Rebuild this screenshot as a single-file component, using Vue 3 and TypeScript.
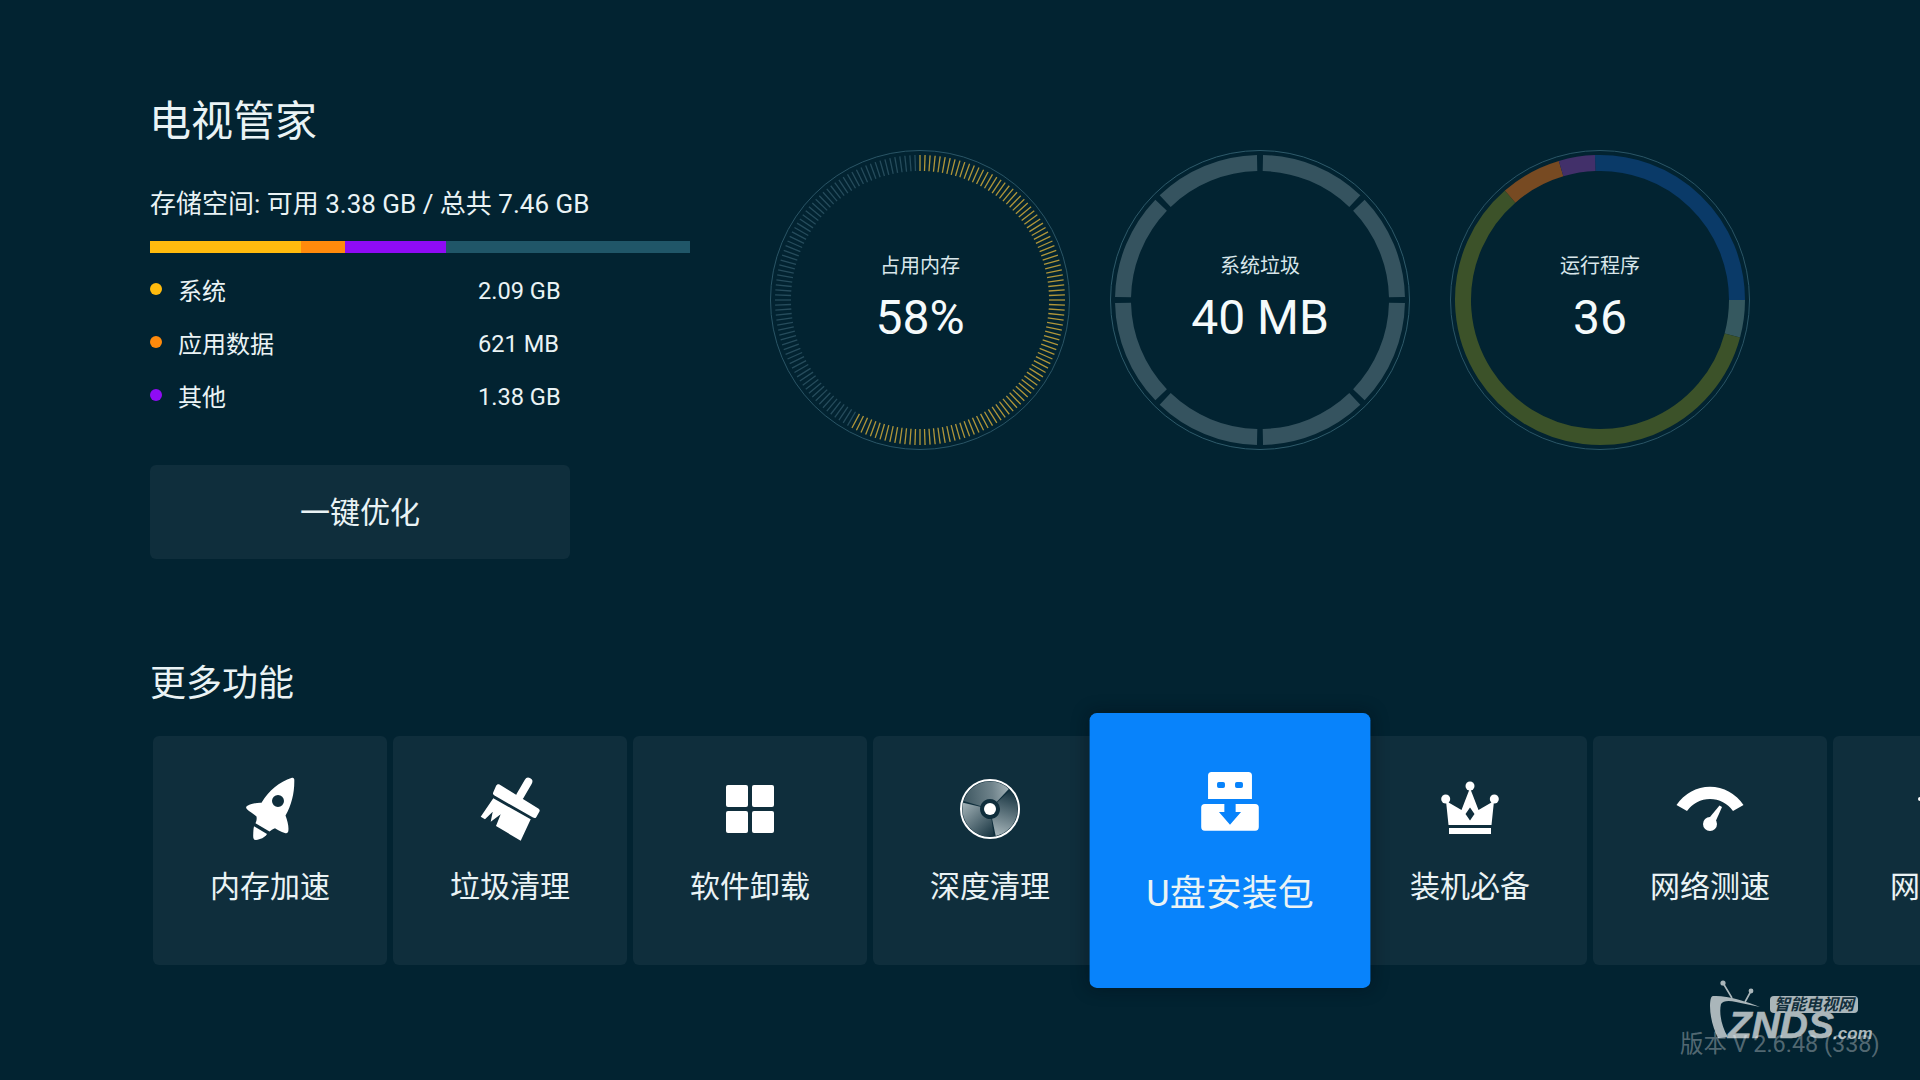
<script setup lang="ts">
import { computed } from 'vue'

const legend = [
  { name: '系统', value: '2.09 GB', color: '#ffbb0e' },
  { name: '应用数据', value: '621 MB', color: '#ff8a0c' },
  { name: '其他', value: '1.38 GB', color: '#8f0bf5' },
]

const storage = [
  { width: 151, color: '#ffbb0e' },
  { width: 44, color: '#ff8a0c' },
  { width: 101, color: '#8f0bf5' },
  { width: 244, color: '#205668' },
]

const C = 150
const point = (r: number, deg: number) => {
  const a = ((deg - 90) * Math.PI) / 180
  return { x: C + r * Math.cos(a), y: C + r * Math.sin(a) }
}
const arc = (from: number, to: number, r = 137) => {
  const s = point(r, from)
  const e = point(r, to)
  const large = to - from > 180 ? 1 : 0
  return `M${s.x.toFixed(2)} ${s.y.toFixed(2)}A${r} ${r} 0 ${large} 1 ${e.x.toFixed(2)} ${e.y.toFixed(2)}`
}

const ticks = computed(() =>
  Array.from({ length: 180 }, (_, i) => {
    const deg = i * 2
    const a = point(129, deg)
    const b = point(145, deg)
    return { id: i, x1: a.x, y1: a.y, x2: b.x, y2: b.y, on: deg < 209 }
  }),
)

const junk = computed(() =>
  Array.from({ length: 8 }, (_, i) => arc(i * 45 + 1.2, (i + 1) * 45 - 1.2)),
)

const programs = computed(() => [
  { d: arc(-2, 90), color: '#0a3a68' },
  { d: arc(90, 105), color: '#35585f' },
  { d: arc(105, 319), color: '#3c5229' },
  { d: arc(319, 343.5), color: '#774a22' },
  { d: arc(343.5, 358), color: '#42306a' },
])

// Disc blades: wedges around (40,41) between an inner and an outer radius.
const wedge = (from: number, to: number) => {
  const at = (r: number, deg: number) => {
    const a = ((deg - 90) * Math.PI) / 180
    return `${(40 + r * Math.cos(a)).toFixed(2)} ${(41 + r * Math.sin(a)).toFixed(2)}`
  }
  return `M${at(10, from)}L${at(27.5, from)}A27.5 27.5 0 0 1 ${at(27.5, to)}L${at(10, to)}A10 10 0 0 0 ${at(10, from)}Z`
}
const blades = [
  { d: wedge(-73, 43), fill: 'url(#bladeA)' },
  { d: wedge(47, 168), fill: 'url(#bladeB)' },
  { d: wedge(172, 283), fill: 'url(#bladeC)' },
]

const cards = [
  { key: 'rocket', label: '内存加速' },
  { key: 'brush', label: '垃圾清理' },
  { key: 'apps', label: '软件卸载' },
  { key: 'disc', label: '深度清理' },
  { key: 'usb', label: 'U盘安装包', active: true },
  { key: 'crown', label: '装机必备' },
  { key: 'gauge', label: '网络测速' },
  { key: 'net', label: '网络诊断' },
]
</script>

<template>
  <div class="page">
    <section class="top">
      <div class="summary">
        <h1 class="title">电视管家</h1>
        <p class="storage">存储空间: 可用 3.38 GB / 总共 7.46 GB</p>
        <div class="bar">
          <span
            v-for="s in storage"
            :key="s.color"
            :style="{ width: s.width + 'px', background: s.color }"
          ></span>
        </div>
        <ul class="legend">
          <li v-for="l in legend" :key="l.name">
            <i class="dot" :style="{ background: l.color }"></i>
            <span class="name">{{ l.name }}</span>
            <span class="val">{{ l.value }}</span>
          </li>
        </ul>
        <div class="optimize">一键优化</div>
      </div>

      <div class="rings">
        <div class="ring">
          <svg class="ring-svg" viewBox="0 0 300 300" width="300" height="300">
            <circle cx="150" cy="150" r="149.5" fill="none" stroke="#2a5566" stroke-width="1" />
            <line
              v-for="t in ticks"
              :key="t.id"
              :x1="t.x1"
              :y1="t.y1"
              :x2="t.x2"
              :y2="t.y2"
              :stroke="t.on ? '#b0963a' : '#264c5c'"
              stroke-width="1.3"
            />
          </svg>
          <span class="ring-label">占用内存</span>
          <span class="ring-value">58%</span>
        </div>
        <div class="ring">
          <svg class="ring-svg" viewBox="0 0 300 300" width="300" height="300">
            <circle cx="150" cy="150" r="149.5" fill="none" stroke="#2e5a6a" stroke-width="1" />
            <path v-for="(d, i) in junk" :key="i" :d="d" fill="none" stroke="#35535f" stroke-width="16" />
          </svg>
          <span class="ring-label">系统垃圾</span>
          <span class="ring-value">40 MB</span>
        </div>
        <div class="ring">
          <svg class="ring-svg" viewBox="0 0 300 300" width="300" height="300">
            <circle cx="150" cy="150" r="149.5" fill="none" stroke="#2a5566" stroke-width="1" />
            <path v-for="p in programs" :key="p.color" :d="p.d" fill="none" :stroke="p.color" stroke-width="16" />
          </svg>
          <span class="ring-label">运行程序</span>
          <span class="ring-value">36</span>
        </div>
      </div>
    </section>

    <h2 class="more">更多功能</h2>

    <div class="cards">
      <div v-for="c in cards" :key="c.key" class="card" :class="{ active: c.active }">
        <svg class="icon" viewBox="0 0 80 80" width="80" height="80">
          <template v-if="c.key === 'rocket'">
            <path
              fill="#fff"
              fill-rule="evenodd"
              d="M62 9.8C63.5 9.4 64.3 10.4 64.3 12C64.5 25 61.5 37 55.5 47.5C57.5 53 58.8 58 58.4 62.5C58.2 65 56.8 65.8 54.8 65C50.8 63.6 47.5 62 45 60.2C42.5 60.8 41 62.5 39.5 63.5L25.5 55.3C26.4 53.5 27 51 26.5 48.5C23.5 46 19.5 43.5 17 41.2C15.6 40 15.9 38.6 17.4 37.8C21.5 35.5 26.5 34.6 31.5 34.8C39 22.5 49 14 62 9.8ZM48 27A6 6 0 1 0 48 39A6 6 0 1 0 48 27Z"
            />
            <path fill="#fff" d="M24 58.3L37 66C35 69.5 30 71.5 26 72C23.5 72.2 23.2 70 23.2 68C23.2 64.5 23.4 61 24 58.3Z" />
          </template>
          <template v-else-if="c.key === 'brush'">
            <path d="M58.3 13.7L50 28" stroke="#fff" stroke-width="8" stroke-linecap="round" fill="none" />
            <path
              fill="#fff"
              d="M29.5 16.5L68.3 40.5C69.8 41.4 70 42.6 69.3 43.8L66.4 48.9C65.6 50.2 64.4 50.4 63 49.6L24.5 27.6C23 26.7 22.6 25.4 23.4 24L26 18C26.8 16.3 28.2 15.7 29.5 16.5Z"
            />
            <path fill="#fff" d="M23.3 30.3L60.7 51.3L50.7 72.7L26 58L30.7 46.3L20.7 53.7L22.7 43.7L15 51.3L10.7 48.7Z" />
          </template>
          <template v-else-if="c.key === 'apps'">
            <rect x="16" y="17" width="22" height="22" rx="2" fill="#fff" />
            <rect x="42" y="17" width="22" height="22" rx="2" fill="#fff" />
            <rect x="16" y="43" width="22" height="22" rx="2" fill="#fff" />
            <rect x="42" y="43" width="22" height="22" rx="2" fill="#fff" />
          </template>
          <template v-else-if="c.key === 'disc'">
            <defs>
              <linearGradient id="bladeA" gradientUnits="userSpaceOnUse" x1="14" y1="30" x2="66" y2="24">
                <stop offset="0" stop-color="#3f5862" />
                <stop offset="0.55" stop-color="#6f838b" />
                <stop offset="1" stop-color="#b4c1c5" />
              </linearGradient>
              <linearGradient id="bladeB" gradientUnits="userSpaceOnUse" x1="64" y1="24" x2="50" y2="68">
                <stop offset="0" stop-color="#15323f" />
                <stop offset="1" stop-color="#a4b3b8" />
              </linearGradient>
              <linearGradient id="bladeC" gradientUnits="userSpaceOnUse" x1="13" y1="34" x2="44" y2="68">
                <stop offset="0" stop-color="#a4b3b8" />
                <stop offset="1" stop-color="#15323f" />
              </linearGradient>
            </defs>
            <circle cx="40" cy="41" r="29" fill="#0f2e3c" stroke="#fff" stroke-width="2" />
            <path v-for="b in blades" :key="b.fill" :d="b.d" :fill="b.fill" />
            <circle cx="40" cy="41" r="6" fill="#fff" />
          </template>
          <template v-else-if="c.key === 'usb'">
            <path
              fill="#fff"
              fill-rule="evenodd"
              d="M24.7 17H55.3A3 3 0 0 1 58.3 20V39.6H21.7V20A3 3 0 0 1 24.7 17ZM30.7 25.4A1.5 1.5 0 0 0 29.2 26.9V28.9A1.5 1.5 0 0 0 30.7 30.4H34.3A1.5 1.5 0 0 0 35.8 28.9V26.9A1.5 1.5 0 0 0 34.3 25.4ZM45.7 25.4A1.5 1.5 0 0 0 44.2 26.9V28.9A1.5 1.5 0 0 0 45.7 30.4H49.3A1.5 1.5 0 0 0 50.8 28.9V26.9A1.5 1.5 0 0 0 49.3 25.4Z"
            />
            <path
              fill="#fff"
              d="M19 43.7H35.3V50.4H30.8L40 61L49.2 50.4H44.7V43.7H61A3 3 0 0 1 64 46.7V63A3 3 0 0 1 61 66H19A3 3 0 0 1 16 63V46.7A3 3 0 0 1 19 43.7Z"
            />
          </template>
          <template v-else-if="c.key === 'crown'">
            <circle cx="40" cy="18" r="4.5" fill="#fff" />
            <circle cx="15.7" cy="31" r="4.5" fill="#fff" />
            <circle cx="64.3" cy="31" r="4.5" fill="#fff" />
            <path
              fill="#fff"
              fill-rule="evenodd"
              d="M40 20L48.5 42L64 33L61.5 57H18.5L16 33L31.5 42ZM40 39.5L35.5 46L40 52.5L44.5 46Z"
            />
            <rect x="19" y="60" width="42" height="6" fill="#fff" />
          </template>
          <template v-else-if="c.key === 'gauge'">
            <path fill="#fff" d="M6.5 37A40 40 0 0 1 73.5 37L63 43A28 28 0 0 0 17 43Z" />
            <circle cx="40" cy="56" r="7" fill="#fff" />
            <path fill="#fff" d="M49.5 37.5L52 39L44.5 56L37.5 52Z" />
          </template>
          <template v-else>
            <circle cx="10" cy="31" r="2" fill="#fff" />
          </template>
        </svg>
        <span class="card-label">{{ c.label }}</span>
      </div>
    </div>

    <div class="watermark">
      <svg class="wm-tv" viewBox="0 0 84 72" width="84" height="72">
        <circle cx="27" cy="5" r="2.6" fill="#aab6ba" />
        <circle cx="55" cy="13" r="2.4" fill="#aab6ba" />
        <path d="M27 5L36 20M55 13L49 24" stroke="#aab6ba" stroke-width="1.6" fill="none" />
        <path
          fill="#aab6ba"
          d="M17 18C30 17 50 23 64 29L40 24C32 22 27 23 25 26C23 34 25 48 32 59L22 60C18 52 14 40 14 28C14 22 15 18 17 18Z"
        />
      </svg>
      <span class="wm-badge">智能电视网</span>
      <span class="wm-znds">ZNDS</span>
      <span class="wm-com">.com</span>
    </div>
    <span class="version">版本 V 2.6.48 (338)</span>
  </div>
</template>

<style>
html,
body {
  margin: 0;
  background: #022331;
}
</style>

<style scoped>
.page {
  position: relative;
  width: 1920px;
  height: 1080px;
  box-sizing: border-box;
  padding: 97px 0 0 150px;
  overflow: hidden;
  background: #022331;
  color: #eaf3f5;
  font-family: Roboto, "Noto Sans CJK SC", sans-serif;
  font-weight: 400;
}
.top {
  display: flex;
  align-items: flex-start;
}
.summary {
  width: 540px;
  flex: none;
}
.title {
  margin: 0 0 0 -1px;
  font-size: 42px;
  line-height: 50px;
  font-weight: 400;
}
.storage {
  margin: 41px 0 0;
  font-size: 26px;
  line-height: 32px;
  white-space: nowrap;
}
.bar {
  display: flex;
  height: 12px;
  margin-top: 21px;
}
.legend {
  list-style: none;
  margin: 11px 0 0;
  padding: 0;
}
.legend li {
  display: flex;
  align-items: center;
  height: 53px;
  font-size: 24px;
}
.dot {
  width: 12px;
  height: 12px;
  border-radius: 50%;
  margin-top: -3px;
}
.name {
  width: 300px;
  margin: 0 0 2px 16px;
}
.val {
  font-size: 23.6px;
}
.optimize {
  width: 420px;
  height: 94px;
  box-sizing: border-box;
  padding-bottom: 4px;
  margin-top: 42px;
  border-radius: 6px;
  background: #0f2e3c;
  display: flex;
  align-items: center;
  justify-content: center;
  font-size: 30px;
}
.rings {
  display: flex;
  gap: 40px;
  margin: 53px 0 0 80px;
}
.ring {
  position: relative;
  width: 300px;
  height: 300px;
  display: flex;
  flex-direction: column;
  align-items: center;
  justify-content: center;
}
.ring-svg {
  position: absolute;
  inset: 0;
}
.ring-label {
  font-size: 20px;
  line-height: 28px;
  color: #d8e6ea;
}
.ring-value {
  margin-top: 8px;
  font-size: 48px;
  line-height: 60px;
  color: #f5fafb;
}
.more {
  margin: 103px 0 0;
  font-size: 36px;
  line-height: 44px;
  font-weight: 400;
}
.cards {
  display: flex;
  gap: 6px;
  margin: 30px 0 0 3px;
}
.card {
  flex: none;
  width: 234px;
  height: 229px;
  box-sizing: border-box;
  padding-top: 32px;
  border-radius: 6px;
  background: #0f2e3c;
  display: flex;
  flex-direction: column;
  align-items: center;
}
.card.active {
  position: relative;
  z-index: 2;
  background: #0883fb;
  transform: scale(1.2);
  box-shadow: 0 0 14px rgba(0, 12, 20, 0.45);
}
.icon {
  flex: none;
}
.card-label {
  margin-top: 19px;
  font-size: 30px;
  line-height: 40px;
  white-space: nowrap;
}
.watermark {
  position: absolute;
  left: 1700px;
  top: 980px;
  width: 200px;
  height: 70px;
  color: #aab6ba;
}
.wm-tv {
  position: absolute;
  left: -4px;
  top: -2px;
}
.wm-badge {
  position: absolute;
  left: 70px;
  top: 16px;
  width: 88px;
  height: 17px;
  border-radius: 4px;
  background: #aab6ba;
  color: #13303d;
  font-size: 16px;
  line-height: 17px;
  font-weight: 700;
  font-style: italic;
  text-align: center;
  white-space: nowrap;
}
.wm-znds {
  position: absolute;
  left: 28px;
  top: 24px;
  font-family: "Liberation Sans", sans-serif;
  font-size: 36px;
  line-height: 44px;
  font-weight: 700;
  font-style: italic;
  transform: scaleX(1.08);
  transform-origin: left center;
  -webkit-text-stroke: 0.6px #aab6ba;
}
.wm-com {
  position: absolute;
  left: 133px;
  top: 45px;
  font-family: "Liberation Sans", sans-serif;
  font-size: 17px;
  line-height: 18px;
  font-weight: 700;
  font-style: italic;
}
.version {
  position: absolute;
  left: 1680px;
  top: 1029px;
  font-size: 23.4px;
  line-height: 30px;
  color: rgba(255, 255, 255, 0.32);
  white-space: nowrap;
}
</style>
